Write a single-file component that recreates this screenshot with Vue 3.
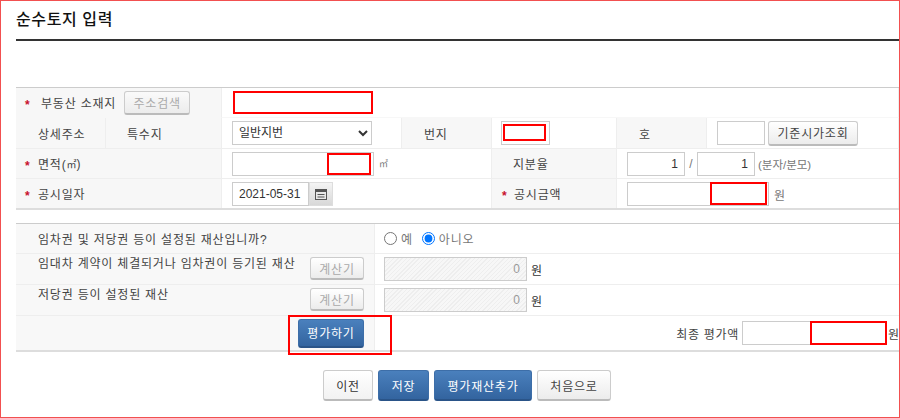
<script setup>
import { ref } from "vue";

// 임차권 여부 라디오 기본값
const hasLease = ref("no");
const landType = ref("일반지번");
</script>

<template>
  <div class="page">
    <h1 class="title">순수토지 입력</h1>

    <div class="form-grid">
      <div class="cell head span-2 row-1">
        <i class="star">*</i><span class="addr-label">부동산 소재지</span>
        <button class="btn btn-gray btn-addr" type="button">주소검색</button>
      </div>
      <div class="cell value span-5 row-1">
        <span class="mark mark-addr"></span>
      </div>

      <div class="cell head detail-a">상세주소</div>
      <div class="cell head detail-b">특수지</div>
      <div class="cell value select-cell">
        <select v-model="landType" class="land-select">
          <option>일반지번</option>
        </select>
      </div>
      <div class="cell head short-head">번지</div>
      <div class="cell value jibun-cell">
        <span class="field-wrap">
          <input class="input input-jibun" type="text" />
          <span class="mark mark-jibun"></span>
        </span>
      </div>
      <div class="cell head short-head">호</div>
      <div class="cell value ho-cell">
        <input class="input input-ho" type="text" />
        <button class="btn btn-gray btn-price" type="button">기준시가조회</button>
      </div>

      <div class="cell head span-2">
        <i class="star">*</i>면적(<span class="sq">㎡</span>)
      </div>
      <div class="cell value span-2 area-cell">
        <span class="field-wrap">
          <input class="input input-area" type="text" />
          <span class="mark mark-area"></span>
        </span>
        <span class="unit-sm">㎡</span>
      </div>
      <div class="cell head indent">지분율</div>
      <div class="cell value span-2 ratio-cell">
        <input class="input input-ratio" type="text" value="1" />
        <span class="slash">/</span>
        <input class="input input-ratio" type="text" value="1" />
        <span class="unit-gray">(분자/분모)</span>
      </div>

      <div class="cell head span-2 row-4">
        <i class="star">*</i>공시일자
      </div>
      <div class="cell value span-2 date-cell row-4 row-4-field">
        <input class="input input-date" type="text" value="2021-05-31" />
        <button class="cal-btn" type="button" aria-label="달력">
          <svg width="12" height="12" viewBox="0 0 12 12">
            <rect x="0.5" y="1.5" width="11" height="10" fill="#e8e8e8" stroke="#555" />
            <rect x="1" y="2" width="10" height="2" fill="#555" />
            <path d="M2.5 6.5h7M2.5 9h7" stroke="#555" />
          </svg>
        </button>
      </div>
      <div class="cell head notice-head row-4">
        <i class="star">*</i>공시금액
      </div>
      <div class="cell value span-2 notice-cell row-4 row-4-field">
        <span class="field-wrap">
          <input class="input input-notice" type="text" />
          <span class="mark mark-notice"></span>
        </span>
        <span class="won">원</span>
      </div>
    </div>

    <div class="eval-grid">
      <div class="ecell ehead">임차권 및 저당권 등이 설정된 재산입니까?</div>
      <div class="ecell evalue radio-cell">
        <label class="radio"><input v-model="hasLease" type="radio" value="yes" />예</label>
        <label class="radio"><input v-model="hasLease" type="radio" value="no" />아니오</label>
      </div>

      <div class="ecell ehead top">
        <span>임대차 계약이 체결되거나 임차권이 등기된 재산</span>
        <button class="btn btn-gray btn-calc" type="button">계산기</button>
      </div>
      <div class="ecell evalue amount-cell">
        <input class="input input-hatch" type="text" value="0" disabled />
        <span class="won-dark">원</span>
      </div>

      <div class="ecell ehead top">
        <span>저당권 등이 설정된 재산</span>
        <button class="btn btn-gray btn-calc" type="button">계산기</button>
      </div>
      <div class="ecell evalue amount-cell">
        <input class="input input-hatch" type="text" value="0" disabled />
        <span class="won-dark">원</span>
      </div>

      <div class="ecell ehead last eval-cell">
        <button class="btn btn-blue btn-eval" type="button">평가하기</button>
        <span class="mark mark-eval"></span>
      </div>
      <div class="ecell evalue last final-cell">
        <span class="final-label">최종 평가액</span>
        <span class="field-wrap">
          <input class="input input-final" type="text" />
          <span class="mark mark-final"></span>
        </span>
        <span class="won-final">원</span>
      </div>
    </div>

    <div class="actions">
      <button class="btn btn-white act-prev" type="button">이전</button>
      <button class="btn btn-blue act-save" type="button">저장</button>
      <button class="btn btn-blue act-add" type="button">평가재산추가</button>
      <button class="btn btn-gray act-first" type="button">처음으로</button>
    </div>
  </div>
</template>

<style scoped>
.page {
  box-sizing: border-box;
  width: 900px;
  height: 418px;
  border: 1px solid #f25050;
  padding: 0 0 0 15px;
  overflow: hidden;
  font-family: "Liberation Sans", "Noto Sans CJK KR", sans-serif;
  font-size: 12px;
  letter-spacing: 0.8px;
  color: #444;
  background: #fff;
}

.title {
  margin: 0;
  height: 38px;
  border-bottom: 2px solid #333;
  font-size: 16px;
  font-weight: 500;
  line-height: 38px;
  letter-spacing: 0.6px;
  color: #111;
}

/* 상단 입력 표 */
.form-grid {
  display: grid;
  grid-template-columns: 90px 116px 180px 90px 125px 90px 192px;
  grid-template-rows: 30px 31px 30px 29px;
  margin-top: 46px;
  border-top: 1px solid #ccc;
  border-bottom: 2px solid #ddd;
}

.cell {
  box-sizing: border-box;
  display: flex;
  align-items: center;
  border-bottom: 1px solid #eee;
}

.head {
  background: #f7f7f7;
  border-right: 1px solid #eee;
}

.value {
  background: #fff;
  border-right: 1px solid #eee;
}

.span-2 {
  grid-column: span 2;
}

.span-5 {
  grid-column: span 5;
}

.row-1 {
  border-bottom-color: #f7f7f7;
}

.row-4 {
  border-bottom: 0;
}

.row-4-field {
  padding-top: 1px;
}

.short-head {
  padding-left: 22px;
}

.indent {
  padding-left: 21px;
}

.star {
  width: 22px;
  padding: 4px 0 0 9px;
  box-sizing: border-box;
  font-style: normal;
  font-weight: 700;
  color: #c8102e;
}

.addr-label {
  margin-left: 3px;
  white-space: nowrap;
}

.sq {
  font-size: 10px;
  letter-spacing: 0;
}

.detail-a {
  padding-left: 22px;
}

.detail-b {
  padding-left: 21px;
}

.notice-head .star {
  padding-left: 10px;
}

.select-cell,
.area-cell,
.date-cell,
.ho-cell {
  padding-left: 10px;
}

.jibun-cell {
  padding-left: 9px;
}

.ho-cell {
  gap: 3px;
}

.ratio-cell,
.notice-cell {
  padding-left: 10px;
}

.input {
  box-sizing: border-box;
  height: 24px;
  border: 1px solid #ccc;
  padding: 0 2px;
  font: inherit;
  letter-spacing: 0;
  color: #333;
  background: #fff;
  outline: none;
}

.field-wrap {
  position: relative;
  display: inline-flex;
}

.land-select {
  box-sizing: border-box;
  width: 140px;
  height: 24px;
  border: 1px solid #ccc;
  border-radius: 0;
  padding-left: 2px;
  font: inherit;
  letter-spacing: 0;
  color: #333;
  background: #fff;
}

.input-jibun {
  width: 49px;
}

.input-ho {
  width: 48px;
}

.input-area {
  width: 142px;
}

.input-ratio {
  width: 58px;
  text-align: right;
  padding-right: 6px;
}

.input-notice {
  width: 142px;
}

.input-date {
  width: 77px;
  padding-left: 6px;
}

.input-final {
  width: 145px;
}

.unit-sm {
  margin-left: 5px;
  font-size: 9px;
  letter-spacing: 0;
  color: #777;
}

.unit-gray {
  margin-left: 3px;
  font-size: 11.5px;
  letter-spacing: 0;
  color: #777;
}

.won {
  margin-left: 5px;
  color: #777;
}

.slash {
  width: 12px;
  text-align: center;
  letter-spacing: 0;
  color: #777;
}

.cal-btn {
  box-sizing: border-box;
  display: flex;
  align-items: center;
  justify-content: center;
  width: 24px;
  height: 24px;
  padding: 0;
  border: 1px solid #ddd;
  background: linear-gradient(#f4f4f4, #d8d8d8);
}

/* 빨간 표시 */
.mark {
  position: absolute;
  box-sizing: border-box;
  border: 2px solid #f00;
  background: #fff;
  pointer-events: none;
}

.value.row-1 {
  position: relative;
}

.mark-addr {
  left: 11px;
  top: 3px;
  width: 140px;
  height: 23px;
}

.mark-jibun {
  left: 2px;
  top: 3px;
  width: 43px;
  height: 17px;
}

.mark-area {
  left: 95px;
  top: 1px;
  width: 44px;
  height: 22px;
}

.mark-notice {
  left: 83px;
  top: 0;
  width: 57px;
  height: 23px;
}

.mark-final {
  left: 68px;
  top: 0;
  width: 77px;
  height: 24px;
}

.mark-eval {
  left: 272px;
  top: -1px;
  width: 104px;
  height: 40px;
  background: transparent;
}

/* 버튼 */
.btn {
  box-sizing: border-box;
  border-radius: 3px;
  font: inherit;
  letter-spacing: 0.8px;
  padding: 0;
  white-space: nowrap;
}

.btn-gray {
  border: 1px solid #ccc;
  border-bottom: 2px solid #bbb;
  background: linear-gradient(#fff, #ececec);
  color: #444;
}

.btn-white {
  border: 1px solid #ccc;
  border-bottom: 2px solid #bbb;
  background: linear-gradient(#fff, #f2f2f2);
  color: #333;
}

.btn-blue {
  border: 1px solid #3d6ea8;
  border-bottom: 2px solid #2a5488;
  background: linear-gradient(#4a80bd, #33649f);
  color: #fff;
}

.btn-addr {
  width: 66px;
  height: 24px;
  margin-left: 8px;
  color: #aaa;
  background: linear-gradient(#fafafa, #ececec);
}

.btn-price {
  width: 90px;
  height: 25px;
}

.btn-calc {
  position: absolute;
  right: 10px;
  top: 3px;
  width: 54px;
  height: 23px;
  color: #aaa;
}

/* 평가 표 */
.eval-grid {
  display: grid;
  grid-template-columns: 359px 524px;
  grid-template-rows: 30px 31px 31px 34px;
  margin-top: 13px;
  border-top: 1px solid #ccc;
  border-bottom: 2px solid #ddd;
}

.ecell {
  box-sizing: border-box;
  position: relative;
  display: flex;
  align-items: center;
  border-bottom: 1px solid #eee;
}

.ehead {
  padding-left: 22px;
  background: #f8f8f8;
  border-right: 1px solid #eee;
}

.ehead.top {
  align-items: flex-start;
}

.evalue {
  padding-left: 9px;
  background: #fff;
}

.last {
  border-bottom: 0;
}

.radio-cell {
  gap: 9px;
  color: #777;
}

.radio {
  display: inline-flex;
  align-items: center;
  gap: 4px;
}

.radio input {
  width: 13px;
  height: 13px;
  margin: 0;
}

.input-hatch {
  width: 143px;
  height: 24px;
  text-align: right;
  padding-right: 6px;
  color: #999;
  background: repeating-linear-gradient(135deg, #eee 0 1px, #f7f7f7 1px 3px);
}

.won-dark {
  margin-left: 4px;
  color: #333;
}

.eval-cell {
  z-index: 1;
  justify-content: flex-end;
  padding-right: 10px;
}

.btn-eval {
  width: 66px;
  height: 29px;
}

.final-cell {
  justify-content: flex-end;
  padding-right: 0;
}

.final-label {
  margin-right: 3px;
  letter-spacing: 0.7px;
  color: #444;
}

.won-final {
  margin-left: 1px;
  width: 11px;
  overflow: hidden;
  white-space: nowrap;
}

/* 하단 버튼 */
.actions {
  display: flex;
  gap: 5px;
  margin-top: 18px;
  padding-left: 307px;
}

.actions .btn {
  height: 31px;
}

.act-prev {
  width: 50px;
}

.act-save {
  width: 51px;
}

.act-add {
  width: 98px;
}

.act-first {
  width: 74px;
}
</style>
